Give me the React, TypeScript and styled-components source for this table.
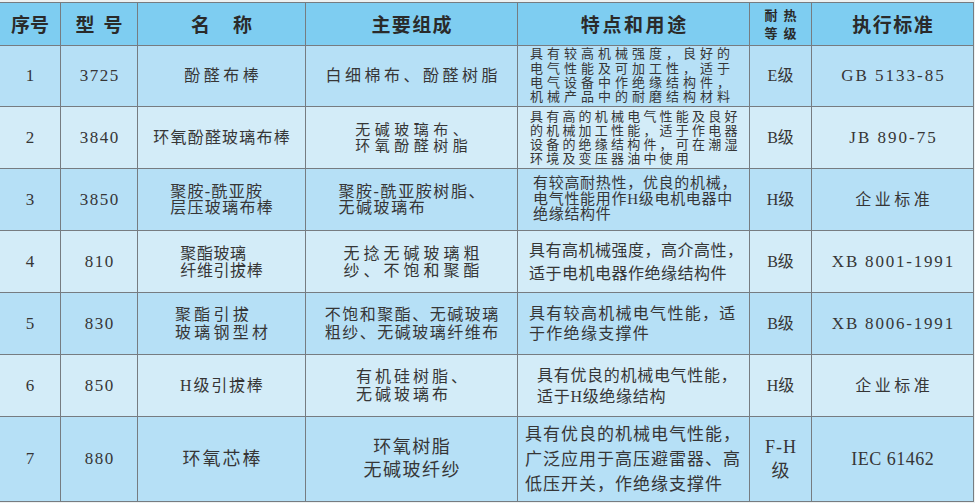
import styled, { createGlobalStyle } from "styled-components";

const GlobalStyle = createGlobalStyle`
  body {
    margin: 0;
    background: #eef1f1;
  }
`;

const LINE = "#767c81";

export const Table = styled.div`
  display: grid;
  grid-template-columns: 61px 77px 168px 212px 232px 62px 162px;
  grid-template-rows: 43px 61px repeat(5, 62px) 85px;
  width: 974px;
  margin-top: 2px;
  border-top: 1px solid ${LINE};
  font-family: "Liberation Serif", "Noto Sans CJK SC", serif;
  color: #363636;
`;

export const HeadCell = styled.div<{ $size?: number; $ls?: number; $lh?: number }>`
  box-sizing: border-box;
  display: flex;
  align-items: center;
  justify-content: center;
  text-align: center;
  background: #7ecdf1;
  border-right: 1px solid ${LINE};
  border-bottom: 1px solid ${LINE};
  font-family: "Noto Sans CJK SC", sans-serif;
  font-weight: 700;
  color: #2a2a2a;
  font-size: ${(p) => p.$size ?? 19}px;
  line-height: ${(p) => p.$lh ?? 22}px;
  letter-spacing: ${(p) => p.$ls ?? 0}px;
  padding-left: ${(p) => p.$ls ?? 0}px;
`;

export const Cell = styled.div<{
  $even: boolean;
  $size?: number;
  $ls?: number;
  $lh?: number;
  $left?: boolean;
  $pad?: number;
}>`
  box-sizing: border-box;
  display: flex;
  align-items: center;
  justify-content: ${(p) => (p.$left ? "flex-start" : "center")};
  text-align: center;
  background: ${(p) => (p.$even ? "#d3ecf8" : "#b6e0f6")};
  border-right: 1px solid ${LINE};
  border-bottom: 1px solid ${LINE};
  font-size: ${(p) => p.$size ?? 16}px;
  line-height: ${(p) => p.$lh ?? 18}px;
  letter-spacing: ${(p) => p.$ls ?? 0}px;
  padding-left: ${(p) => (p.$left ? p.$pad ?? 12 : p.$ls ?? 0)}px;
  white-space: nowrap;
`;

export const Block = styled.div<{ $align?: "left" | "center" }>`
  display: inline-block;
  text-align: ${(p) => p.$align ?? "center"};
`;

type Text = { lines: string[]; size?: number; ls?: number; lh?: number; align?: "left" | "center"; pad?: number };

type Row = {
  no: string;
  model: string;
  name: Text;
  comp: Text;
  desc: Text;
  heat: Text;
  std: Text;
};

const rows: Row[] = [
  {
    no: "1",
    model: "3725",
    name: { lines: ["酚醛布棒"], ls: 3.5 },
    comp: { lines: ["白细棉布、酚醛树脂"], ls: 3.5 },
    desc: {
      lines: ["具有较高机械强度，良好的", "电气性能及可加工性，适于", "电气设备中作绝缘结构件，", "机械产品中的耐磨结构材料"],
      size: 13,
      ls: 4,
      lh: 14.3,
      pad: 12,
    },
    heat: { lines: ["E级"] },
    std: { lines: ["GB 5133-85"], size: 17, ls: 2 },
  },
  {
    no: "2",
    model: "3840",
    name: { lines: ["环氧酚醛玻璃布棒"], ls: 1.2 },
    comp: { lines: ["无碱玻璃布、", "环氧酚醛树脂"], size: 15, ls: 4.5, lh: 16 },
    desc: {
      lines: ["具有高的机械电气性能及良好", "的机械加工性能，适于作电器", "设备的绝缘结构件，可在潮湿", "环境及变压器油中使用"],
      size: 13,
      ls: 3.2,
      lh: 14,
      pad: 12,
    },
    heat: { lines: ["B级"] },
    std: { lines: ["JB 890-75"], size: 17, ls: 2 },
  },
  {
    no: "3",
    model: "3850",
    name: { lines: ["聚胺-酰亚胺", "层压玻璃布棒"], ls: 1.3, lh: 16, align: "left" },
    comp: { lines: ["聚胺-酰亚胺树脂、", "无碱玻璃布"], ls: 1.6, lh: 16, align: "left" },
    desc: {
      lines: ["有较高耐热性，优良的机械，", "电气性能用作H级电机电器中", "绝缘结构件"],
      size: 15,
      ls: 0.7,
      lh: 15.5,
      pad: 15,
    },
    heat: { lines: ["H级"] },
    std: { lines: ["企业标准"], ls: 3.5 },
  },
  {
    no: "4",
    model: "810",
    name: { lines: ["聚酯玻璃", "纤维引拔棒"], ls: 0.6, lh: 17, align: "left" },
    comp: { lines: ["无捻无碱玻璃粗", "纱、不饱和聚酯"], ls: 4, lh: 17 },
    desc: { lines: ["具有高机械强度，高介高性，", "适于电机电器作绝缘结构件"], size: 16, ls: 0.5, lh: 23, pad: 11 },
    heat: { lines: ["B级"] },
    std: { lines: ["XB 8001-1991"], size: 17, ls: 1.8 },
  },
  {
    no: "5",
    model: "830",
    name: { lines: ["聚酯引拔", "玻璃钢型材"], ls: 3.3, lh: 18, align: "left" },
    comp: { lines: ["不饱和聚酯、无碱玻璃", "粗纱、无碱玻璃纤维布"], ls: 1.5, lh: 18 },
    desc: { lines: ["具有较高机械电气性能，适", "于作绝缘支撑件"], size: 16, ls: 1.3, lh: 20, pad: 11 },
    heat: { lines: ["B级"] },
    std: { lines: ["XB 8006-1991"], size: 17, ls: 1.8 },
  },
  {
    no: "6",
    model: "850",
    name: { lines: ["H级引拔棒"], ls: 1.8 },
    comp: { lines: ["有机硅树脂、", "无碱玻璃布"], ls: 3, lh: 18, align: "left" },
    desc: { lines: ["具有优良的机械电气性能，", "适于H级绝缘结构"], size: 16, ls: 0.7, lh: 21, pad: 19 },
    heat: { lines: ["H级"] },
    std: { lines: ["企业标准"], ls: 3.5 },
  },
  {
    no: "7",
    model: "880",
    name: { lines: ["环氧芯棒"], size: 18, ls: 2 },
    comp: { lines: ["环氧树脂", "无碱玻纤纱"], size: 18, ls: 1.5, lh: 23 },
    desc: {
      lines: ["具有优良的机械电气性能，", "广泛应用于高压避雷器、高", "低压开关，作绝缘支撑件"],
      size: 17,
      ls: 1,
      lh: 25,
      pad: 7,
    },
    heat: { lines: ["F-H", "级"], size: 18, lh: 24, ls: 1 },
    std: { lines: ["IEC 61462"], size: 18, ls: 0.5 },
  },
];

function TextCell({ t, even, left }: { t: Text; even: boolean; left?: boolean }) {
  return (
    <Cell $even={even} $size={t.size} $ls={t.ls} $lh={t.lh} $left={left} $pad={t.pad}>
      <Block $align={left ? "left" : t.align}>
        {t.lines.map((line, i) => (
          <div key={i}>{line}</div>
        ))}
      </Block>
    </Cell>
  );
}

export default function App() {
  return (
    <>
      <GlobalStyle />
      <Table>
        <HeadCell>序号</HeadCell>
        <HeadCell $ls={9}>型号</HeadCell>
        <HeadCell $ls={23}>名称</HeadCell>
        <HeadCell $ls={1.3}>主要组成</HeadCell>
        <HeadCell $ls={2.6}>特点和用途</HeadCell>
        <HeadCell $size={13} $ls={6} $lh={18}>
          <Block>
            <div>耐热</div>
            <div>等级</div>
          </Block>
        </HeadCell>
        <HeadCell $ls={1.5}>执行标准</HeadCell>

        {rows.map((row, index) => {
          const even = index % 2 === 1;
          return [
            <Cell key={`no${index}`} $even={even} $size={17}>
              {row.no}
            </Cell>,
            <Cell key={`m${index}`} $even={even} $size={17} $ls={1.5}>
              {row.model}
            </Cell>,
            <TextCell key={`n${index}`} t={row.name} even={even} />,
            <TextCell key={`c${index}`} t={row.comp} even={even} />,
            <TextCell key={`d${index}`} t={row.desc} even={even} left />,
            <TextCell key={`h${index}`} t={row.heat} even={even} />,
            <TextCell key={`s${index}`} t={row.std} even={even} />,
          ];
        })}
      </Table>
    </>
  );
}
